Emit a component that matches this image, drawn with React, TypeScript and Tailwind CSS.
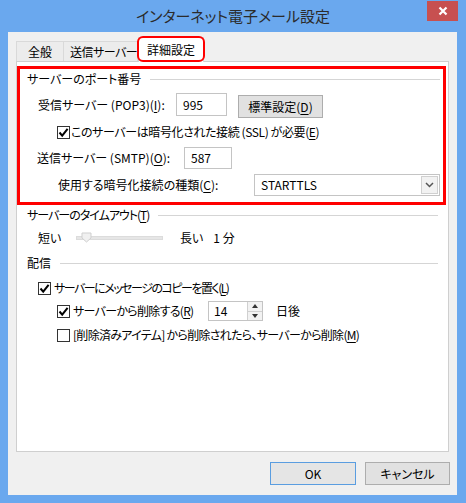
import React from "react";

const U = ({ c }: { c: string }) => (
  <span className="underline underline-offset-[2px]">{c}</span>
);

function CheckBox({ checked }: { checked: boolean }) {
  return (
    <span className="w-[13px] h-[13px] border border-[#333333] bg-white flex items-center justify-center shrink-0">
      {checked && (
        <svg width="11" height="11" viewBox="0 0 11 11">
          <path d="M1.5 5.5 L4.2 8.6 L9.6 1.8" fill="none" stroke="#000" strokeWidth="2" />
        </svg>
      )}
    </span>
  );
}

function GroupHeader({ children, cls }: { children: React.ReactNode; cls: string }) {
  return (
    <div className={"flex items-center h-[20px] " + cls}>
      <span className="whitespace-nowrap">{children}</span>
      <div className="flex-1 h-px bg-[#d5d5d5] ml-[9px]" />
    </div>
  );
}

function TextBox({ value, w, h }: { value: string; w: string; h: string }) {
  return (
    <div className={"border border-[#c4c4c4] bg-white flex items-center pl-[6px] " + w + " " + h}>
      {value}
    </div>
  );
}

export default function App() {
  return (
    <div className="w-[466px] h-[503px] bg-[#6aa8ee] flex flex-col font-['Noto_Sans_CJK_JP',sans-serif] [font-feature-settings:'palt'] text-[12px] text-black leading-none">
      {/* Title bar */}
      <div className="h-[32px] relative flex items-center justify-center shrink-0">
        <span className="text-[15px] text-[#2b2b2b] mt-[-1px]">インターネット電子メール設定</span>
        <div className="absolute left-[427px] top-[1px] w-[31px] h-[20px] bg-[#c75050] flex items-center justify-center">
          <svg width="10" height="10" viewBox="0 0 10 10">
            <path d="M1.5 1.5 L8.5 8.5 M8.5 1.5 L1.5 8.5" stroke="#fff" strokeWidth="2.2" />
          </svg>
        </div>
      </div>

      {/* Client area */}
      <div className="ml-[8px] mr-[9px] mb-[8px] flex-1 bg-[#f0f0f0] flex flex-col pt-[5px] pl-[8px] pr-[8px]">
        {/* Tabs */}
        <div className="flex items-end h-[24px]">
          <div className="w-[48px] h-[20px] border border-b-0 border-[#d9d9d9] bg-[#ececec] flex items-center justify-center">
            全般
          </div>
          <div className="w-[74px] h-[20px] border border-b-0 border-l-0 border-[#d9d9d9] bg-[#ececec] flex items-center pl-[6px] whitespace-nowrap tracking-[-0.5px]">
            送信サーバー
          </div>
          <div className="relative z-10 w-[66px] h-[25px] mb-[-1px] border border-b-0 border-[#d9d9d9] bg-white flex items-center justify-center">
            詳細設定
            <div className="absolute -left-[2px] -right-[2px] top-[-2px] bottom-[0px] border-[2.5px] border-[#ff0000] rounded-[6px]" />
          </div>
        </div>

        {/* Panel */}
        <div className="h-[391px] border border-[#cfcfcf] bg-white flex flex-col">
          {/* Red group */}
          <div className="mt-[4px] mr-[2px] h-[139px] border-[3px] border-[#ff0000] flex flex-col pl-[7px] pr-[3px]">
            <GroupHeader cls="">サーバーのポート番号</GroupHeader>
            <div className="flex items-start h-[25px] mt-[4px] pl-[11px]">
              <div className="w-[138px] h-[23px] flex items-center">
                受信サーバー (POP3)(<U c="I" />):
              </div>
              <TextBox value="995" w="w-[51px]" h="h-[23px]" />
              <div className="ml-[11px] mt-[2px] w-[85px] h-[23px] border border-[#adadad] bg-[#e1e1e1] flex items-center justify-center">
                標準設定(<U c="D" />)
              </div>
            </div>
            <div className="flex items-center h-[18px] mt-[5px] pl-[30px] gap-[1px]">
              <CheckBox checked />
              <span className="tracking-[-0.4px] whitespace-nowrap">
                このサーバーは暗号化された接続 (SSL) が必要(<U c="E" />)
              </span>
            </div>
            <div className="flex items-center h-[22px] mt-[6px] pl-[10px]">
              <div className="w-[147px]">
                送信サーバー (SMTP)(<U c="O" />):
              </div>
              <TextBox value="587" w="w-[48px]" h="h-[22px]" />
            </div>
            <div className="flex items-center h-[22px] mt-[5px] pl-[31px]">
              <div className="w-[196px]">
                使用する暗号化接続の種類(<U c="C" />):
              </div>
              <div className="w-[186px] h-[22px] border border-[#c4c4c4] bg-white flex items-center pl-[6px]">
                <span className="flex-1">STARTTLS</span>
                <div className="w-[17px] h-[18px] mr-[1px] border border-[#d0d0d0] bg-[#f2f2f2] flex items-center justify-center">
                  <svg width="9" height="6" viewBox="0 0 9 6">
                    <path d="M1 1 L4.5 4.5 L8 1" fill="none" stroke="#555" strokeWidth="1.5" />
                  </svg>
                </div>
              </div>
            </div>
          </div>

          {/* Timeout */}
          <GroupHeader cls="pl-[10px] pr-[10px]">
            <span className="tracking-[-1px]">
              サーバーのタイムアウト(<U c="T" />)
            </span>
          </GroupHeader>
          <div className="flex items-center h-[20px] mt-[3px] pl-[21px]">
            <span className="w-[38px]">短い</span>
            <div className="relative w-[87px] h-[4px] bg-[#e6e6e6] border border-[#dcdcdc]">
              <svg className="absolute left-[4px] top-[-5px]" width="11" height="11" viewBox="0 0 11 11">
                <path d="M1 1 H10 V6 L5.5 10 L1 6 Z" fill="#f0f0f0" stroke="#cfcfcf" />
              </svg>
            </div>
            <span className="ml-[17px]">長い</span>
            <span className="ml-[10px]">1 分</span>
          </div>

          {/* Delivery */}
          <GroupHeader cls="pl-[10px] pr-[10px] mt-[5px]">配信</GroupHeader>
          <div className="flex items-center h-[20px] mt-[5px] pl-[21px] gap-[3px]">
            <CheckBox checked />
            <span className="tracking-[-1.5px] whitespace-nowrap">
              サーバーにメッセージのコピーを置く(<U c="L" />)
            </span>
          </div>
          <div className="flex items-center h-[22px] mt-[2px] pl-[40px]">
            <div className="w-[151px] flex items-center gap-[3px]">
              <CheckBox checked />
              <span className="tracking-[-0.7px] whitespace-nowrap">
                サーバーから削除する(<U c="R" />)
              </span>
            </div>
            <div className="w-[55px] h-[20px] border border-[#c4c4c4] bg-white flex items-center">
              <span className="flex-1 pl-[5px]">14</span>
              <div className="w-[15px] h-[18px] flex flex-col border-l border-[#d0d0d0]">
                <div className="flex-1 bg-[#f2f2f2] border-b border-[#d0d0d0] flex items-center justify-center">
                  <svg width="6" height="4" viewBox="0 0 6 4"><path d="M0 4 L3 0 L6 4 Z" fill="#333" /></svg>
                </div>
                <div className="flex-1 bg-[#f2f2f2] flex items-center justify-center">
                  <svg width="6" height="4" viewBox="0 0 6 4"><path d="M0 0 L3 4 L6 0 Z" fill="#333" /></svg>
                </div>
              </div>
            </div>
            <span className="ml-[13px]">日後</span>
          </div>
          <div className="flex items-center h-[20px] mt-[3px] pl-[40px] gap-[3px]">
            <CheckBox checked={false} />
            <span className="tracking-[-0.7px] whitespace-nowrap">
              [削除済みアイテム] から削除されたら、サーバーから削除(<U c="M" />)
            </span>
          </div>
        </div>

        {/* Buttons */}
        <div className="flex justify-end gap-[9px] mt-[10px] mr-[-1px]">
          <div className="w-[86px] h-[23px] border border-[#5a9de0] bg-[#e5e5e5] flex items-center justify-center">
            OK
          </div>
          <div className="w-[85px] h-[23px] border border-[#adadad] bg-[#e1e1e1] flex items-center justify-center">
            キャンセル
          </div>
        </div>
      </div>
    </div>
  );
}
